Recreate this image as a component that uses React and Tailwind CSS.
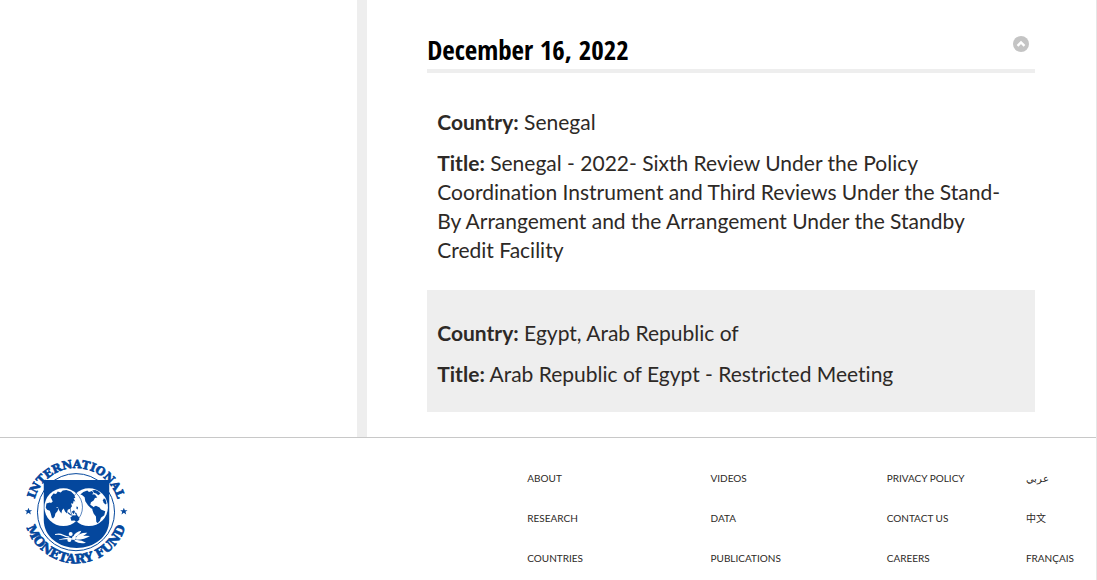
import clsx from 'clsx';

const meetings = [
  {
    country: 'Senegal',
    title:
      'Senegal - 2022- Sixth Review Under the Policy Coordination Instrument and Third Reviews Under the Stand-By Arrangement and the Arrangement Under the Standby Credit Facility',
  },
  {
    country: 'Egypt, Arab Republic of',
    title: 'Arab Republic of Egypt - Restricted Meeting',
  },
];

const footerLinks = [
  ['About', 'Videos', 'Privacy Policy', 'عربي'],
  ['Research', 'Data', 'Contact Us', '中文'],
  ['Countries', 'Publications', 'Careers', 'Français'],
];

function Seal() {
  return (
    <svg viewBox="38 90 318 322" className="w-[106px] h-[107px] overflow-visible" role="img" aria-label="International Monetary Fund">
      <defs>
        <path id="seal-top" d="M 69 270 A 130 130 0 1 1 325 270" />
        <path id="seal-bottom" d="M 42 230 A 156 156 0 1 0 352 230" />
      </defs>
      <g fill="#04479d">
        <g fontFamily="'DejaVu Serif', serif" fontWeight="bold" textAnchor="middle" stroke="#04479d" strokeWidth="2">
          <text fontSize="34">
            <textPath href="#seal-top" startOffset="50%">INTERNATIONAL</textPath>
          </text>
          <text fontSize="38">
            <textPath href="#seal-bottom" startOffset="50%">MONETARY FUND</textPath>
          </text>
        </g>
        <path d="M54 237l3 7h8l-6 5 2 8-7-5-7 5 2-8-6-5h8zM341 237l3 7h8l-6 5 2 8-7-5-7 5 2-8-6-5h8z" />
        <circle cx="197" cy="250" r="116" fill="none" stroke="#04479d" strokeWidth="3" />
        <path d="M100 153h197v120c0 52-46 85-98 85s-99-33-99-85z" />
      </g>
      <circle cx="159" cy="235" r="57" fill="#fff" />
      <circle cx="236" cy="235" r="57" fill="#fff" />
      <g fill="none" stroke="#04479d" strokeWidth="2">
        <path d="M198 193a57 57 0 0 1 0 84M198 193a57 57 0 0 0 0 84" />
      </g>
      <g fill="#04479d">
        <path d="M121 205l8-11 8 1 5-7 9 3 6-6 11-2 14 5 9 9 4 10-5 1 5 11-5-3-2 9-6-2 3 9-6 8-7 3-2 11-6-6-4-9-5 5-2 10-6-8-4-10-8-2-5-6-7 2-3-6 7-6z" />
        <path d="M108 224l10-3 9 3 7 4 5 9 6 1-4 9-6 7-2 9-5 6-4-3-3-12-3-8-8-3-4-6z" />
        <path d="M171 249l7 4 7 7-5-1-7-5zM184 249l7-5 3 5-4 7zM196 250l5 7-4 1-3-4zM199 232l4 3-1 7-4-3z" />
        <path d="M180 266l9-7 6 1 3-4 8 9 1 8-7 6-8-4-9 1z" />
        <path d="M210 197l9-8 12-4 5 4 9-3 5 6-5 4 9 1 7 9-7 1-4 8-8 5-2 8 8 5 3 9-9-4-9-9-8-12-2-12-8-7z" />
        <path d="M246 184l9-1 9 4 7 7-7 5-6-5-6-2z" />
        <path d="M248 235l9-4 11 5 4 6 13 5-3 12-10 8-3 9-7 7-4-4-1-16-7-9-4-11z" />
        <path d="M281 208l5 4 3 12-3 3-6-5-2-8z" />
      </g>
      <g fill="#fff">
        <path d="M134 316q14-4 25 2 11 5 18 5l-1 3q-11 0-19-5-11-4-23-2zM146 332q14-5 32-6l10 4-1 3q-22-4-41 1z" />
        <circle cx="181" cy="316" r="6" />
        <circle cx="177" cy="334" r="6" />
        <circle cx="191" cy="328" r="6" />
        <path d="M189 323q6-14 24-17-5 13-21 20zM197 326q9-15 34-14-10 12-34 17zM197 330q17-13 42-8-15 11-41 11zM194 334q18-2 33 8-18 5-35-5z" />
      </g>
    </svg>
  );
}

function Field({ label, children }) {
  return (
    <p className="text-[21px] leading-[29px]">
      <strong className="font-bold">{label}:</strong> {children}
    </p>
  );
}

export default function App() {
  return (
    <div className="min-h-screen border-r border-[#e6e6e6] bg-white font-['Lato','Noto_Sans_CJK_SC',sans-serif] text-[#2d2926] [font-variant-ligatures:none]">
      <main className="flex">
        <aside className="w-[32.6%] shrink-0" />
        <section className="flex-1 border-l-10 border-[#eeeeee] pr-[61px] pb-[25px] pl-[60px] pt-8">
          <header className="flex items-start justify-between border-b-4 border-[#eeeeee] pb-[2px]">
            <h2 className="font-['Open_Sans_Condensed','Noto_Sans_Condensed','Roboto_Condensed','Lato',sans-serif] text-[27px] leading-[35px] font-bold text-black">
              December 16, 2022
            </h2>
            <button type="button" aria-label="Collapse" className="mt-1 mr-[6px]">
              <svg viewBox="0 0 16 16" className="size-4">
                <circle cx="8" cy="8" r="8" fill="#c4c4c4" />
                <path d="M4.5 9.8L8 6.4l3.5 3.4" fill="none" stroke="#fff" strokeWidth="2.4" />
              </svg>
            </button>
          </header>
          <div className="flex flex-col gap-0.5 pt-1.5">
            {meetings.map((meeting, i) => (
              <article
                key={meeting.country}
                className={clsx('flex flex-col gap-3 pt-7 pr-6 pb-6 pl-[10px]', i % 2 === 1 && 'bg-[#eeeeee]')}
              >
                <Field label="Country">{meeting.country}</Field>
                <Field label="Title">{meeting.title}</Field>
              </article>
            ))}
          </div>
        </section>
      </main>

      <footer className="flex items-start justify-between border-t border-[#c8c8c8] pl-[23px] pt-[21px]">
        <a href="#home">
          <Seal />
        </a>
        <nav className="mt-[11px] grid w-[53%] grid-cols-[183fr_176fr_139fr_70fr] gap-y-6">
          {footerLinks.flat().map((label) => (
            <a key={label} href="#footer" className="text-[10px] leading-4 uppercase">
              {label}
            </a>
          ))}
        </nav>
      </footer>
    </div>
  );
}
